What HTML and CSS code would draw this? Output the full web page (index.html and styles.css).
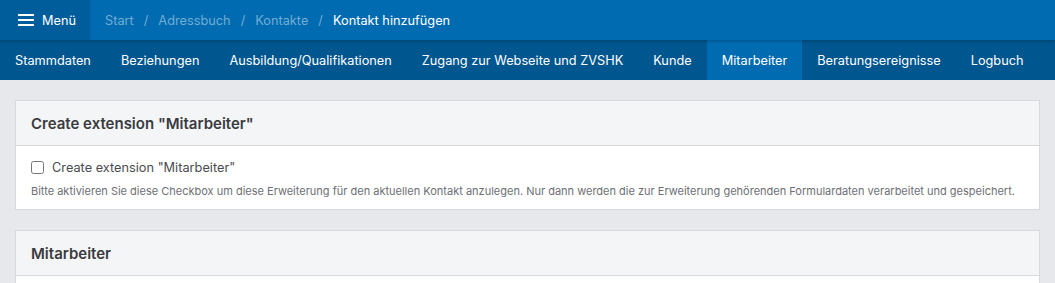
FILE: index.html
```html
<!DOCTYPE html>
<html lang="de">
<head>
<meta charset="utf-8">
<title>Kontakt hinzufügen</title>
<link rel="stylesheet" href="styles.css">
</head>
<body>
<header class="topbar">
  <button class="menu-btn" type="button">
    <svg class="burger" width="16" height="12" viewBox="0 0 16 12"><rect x="0" y="0" width="16" height="2" rx="0.5"/><rect x="0" y="5" width="16" height="2" rx="0.5"/><rect x="0" y="10" width="16" height="2" rx="0.5"/></svg>
    <span>Menü</span>
  </button>
  <nav class="crumbs">
    <a href="#">Start</a><span class="sep">/</span>
    <a href="#">Adressbuch</a><span class="sep">/</span>
    <a href="#">Kontakte</a><span class="sep">/</span>
    <span class="current">Kontakt hinzufügen</span>
  </nav>
</header>
<nav class="tabs">
  <a href="#">Stammdaten</a>
  <a href="#">Beziehungen</a>
  <a href="#">Ausbildung/Qualifikationen</a>
  <a href="#">Zugang zur Webseite und ZVSHK</a>
  <a href="#">Kunde</a>
  <a href="#" class="active">Mitarbeiter</a>
  <a href="#">Beratungsereignisse</a>
  <a href="#">Logbuch</a>
</nav>
<main class="content">
  <section class="card">
    <div class="card-head">Create extension "Mitarbeiter"</div>
    <div class="card-body">
      <label class="check"><input type="checkbox"><span>Create extension "Mitarbeiter"</span></label>
      <p class="help">Bitte aktivieren Sie diese Checkbox um diese Erweiterung für den aktuellen Kontakt anzulegen. Nur dann werden die zur Erweiterung gehörenden Formulardaten verarbeitet und gespeichert.</p>
    </div>
  </section>
  <section class="card">
    <div class="card-head">Mitarbeiter</div>
    <div class="card-body tall"></div>
  </section>
</main>
</body>
</html>
```
FILE: styles.css
```css
* { box-sizing: border-box; }
html, body { margin: 0; padding: 0; }
body {
  font-family: Inter, "Noto Sans", sans-serif;
  background: #e7e8eb;
  color: #3b3c41;
  overflow: hidden;
}
a { text-decoration: none; color: inherit; }

.topbar {
  height: 40px;
  background: #006bb1;
  display: flex;
  align-items: stretch;
  position: relative;
  z-index: 2;
  box-shadow: 0 1px 3px rgba(0,0,0,0.25);
}
.menu-btn {
  width: 90px;
  border: 0;
  margin: 0;
  padding: 0 0 0 18px;
  background: #005d9c;
  color: #fff;
  font: inherit;
  font-size: 12.75px;
  display: flex;
  align-items: center;
  gap: 8px;
}
.burger { fill: #fff; display: block; }
.crumbs {
  display: flex;
  align-items: center;
  padding-left: 15px;
  font-size: 12.75px;
  color: rgba(255,255,255,0.45);
}
.crumbs .sep { margin: 0 10px; }
.crumbs .current { color: #fff; }

.tabs {
  height: 40px;
  background: #00568f;
  display: flex;
  position: relative;
  z-index: 1;
}
.tabs a {
  display: flex;
  align-items: center;
  padding: 0 15px;
  font-size: 12.75px;
  color: #fff;
}
.tabs a.active { background: #006bb1; }

.content {
  padding: 20px 15px;
}
.card {
  background: #fff;
  border: 1px solid #d8d9dc;
  margin-bottom: 20px;
}
.card-head {
  height: 45px;
  background: #f4f5f7;
  border-bottom: 1px solid #d8d9dc;
  padding: 0 15px;
  display: flex;
  align-items: center;
  font-size: 15px;
  font-weight: 600;
  color: #3a3b40;
}
.card-body {
  padding: 13px 15px 11px;
}
.card-body.tall { height: 60px; }
.check {
  display: flex;
  align-items: center;
  gap: 8px;
  font-size: 12.75px;
  color: #4a4b50;
  height: 16px;
}
.check input {
  margin: 0;
  width: 13px;
  height: 13px;
}
.help {
  margin: 9px 0 0;
  font-size: 11px;
  color: #6d6f75;
  line-height: 14px;
}
```
